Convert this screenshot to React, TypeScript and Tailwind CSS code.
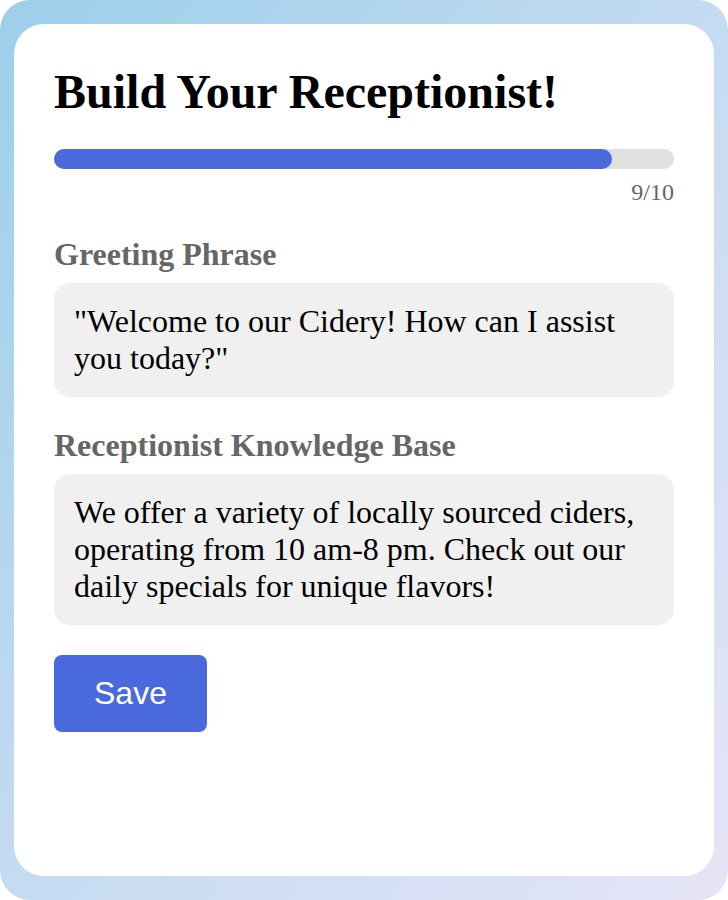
import React from 'react';

function App() {
  const step = 9;
  const total = 10;

  return (
    <div className="w-[728px] h-[900px] rounded-[30px] bg-gradient-to-br from-[#9ccfea] via-[#c4dbf2] to-[#e6e4f7] px-[14px] py-[24px] font-['Liberation_Serif',serif]">
      <div className="h-full rounded-[30px] bg-white p-[40px]">
        <h1 className="text-[48px] font-bold leading-[normal] text-black">Build Your Receptionist!</h1>

        {/* progress */}
        <div className="mt-[30px] h-[20px] w-full rounded-full bg-[#e0e0e0]">
          <div
            className="h-full rounded-full bg-[#4a69dd]"
            style={{ width: `${(step / total) * 100}%` }}
          ></div>
        </div>
        <div className="mt-[10px] text-right text-[24px] leading-[normal] text-[#666]">
          {step}/{total}
        </div>

        <div className="mt-[30px] flex flex-col">
          <label className="text-[32px] font-bold leading-[normal] text-[#666]">Greeting Phrase</label>
          <div className="mt-[10px] rounded-[16px] bg-[#f0f0f0] p-[20px] text-[32px] leading-[normal] text-black">
            "Welcome to our Cidery! How can I assist you today?"
          </div>

          <label className="mt-[30px] text-[32px] font-bold leading-[normal] text-[#666]">
            Receptionist Knowledge Base
          </label>
          <div className="mt-[10px] rounded-[16px] bg-[#f0f0f0] p-[20px] text-[32px] leading-[normal] text-black">
            We offer a variety of locally sourced ciders, operating from 10 am-8 pm. Check out our daily specials for unique flavors!
          </div>
        </div>

        <button className="mt-[30px] rounded-[8px] bg-[#4a69dd] px-[40px] py-[20px] font-['Liberation_Sans',sans-serif] text-[32px] leading-[normal] text-white">
          Save
        </button>
      </div>
    </div>
  );
}

export default App;
